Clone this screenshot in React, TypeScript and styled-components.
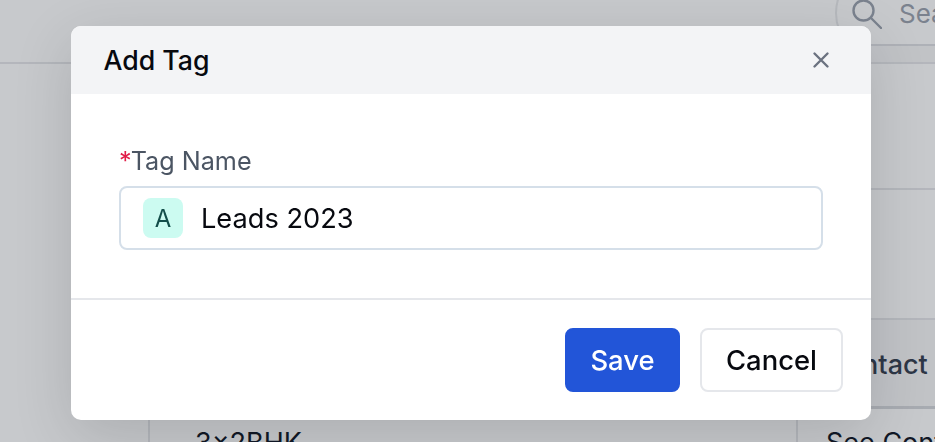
import React from 'react';
import styled, { createGlobalStyle } from 'styled-components';

const GlobalStyle = createGlobalStyle`
  html, body {
    margin: 0;
    padding: 0;
    width: 935px;
    height: 442px;
    overflow: hidden;
    font-family: 'Inter', 'Liberation Sans', sans-serif;
  }
  * { box-sizing: border-box; }
`;

// dimmed page behind the dialog
const Page = styled.div`
  width: 935px;
  height: 442px;
  overflow: hidden;
  background: #fff;
`;

const TopBar = styled.header`
  height: 64px;
  border-bottom: 2px solid #e6e7ea;
  display: flex;
  justify-content: flex-end;
`;

const TopRight = styled.div`
  width: 300px;
  background: #f7f7f8;
`;

const SearchArea = styled.div`
  height: 46px;
  background: #fff;
  border-bottom: 2px solid #dfe0e4;
  padding-left: 200px;
  overflow: hidden;
`;

const SearchPill = styled.div`
  width: 300px;
  height: 90px;
  margin-top: -32px;
  border: 2px solid #e9eaec;
  border-radius: 45px;
  display: flex;
  align-items: center;
  gap: 17px;
  padding: 1px 0 0 15px;
  color: #9ca3af;
  font-size: 26px;
  line-height: 30px;

  svg {
    flex: none;
  }
`;

const Table = styled.div`
  margin-left: 148px;
  display: grid;
  grid-template-columns: 648px 1fr;
  grid-template-rows: 126px 130px 89px 60px;
`;

const Cell = styled.div<{ $head?: boolean }>`
  border-left: 2px solid #e6e7ea;
  border-bottom: ${p => (p.$head ? '3px solid #d6d8dc' : '2px solid #e6e7ea')};
  background: ${p => (p.$head ? '#f7f7f8' : '#fff')};
  font-size: 27px;
  line-height: 32px;
  color: #111827;
  padding-left: 28px;
  white-space: nowrap;
`;

const HeadLabel = styled.span`
  display: block;
  padding-top: 29px;
  color: #374151;
  font-weight: 500;
`;

const RowLabel = styled.span<{ $left: number }>`
  display: block;
  padding-top: 18px;
  padding-left: ${p => p.$left}px;
`;

// dialog layer
const Overlay = styled.div`
  position: fixed;
  inset: 0;
  background: rgba(17, 24, 39, 0.235);
  padding: 26px 0 0 71px;
`;

const Dialog = styled.div`
  width: 800px;
  height: 394px;
  background: #fff;
  border-radius: 10px;
  overflow: hidden;
  display: flex;
  flex-direction: column;
  box-shadow: 0 16px 60px rgba(0, 0, 0, 0.14);
`;

const DialogHeader = styled.div`
  flex: none;
  height: 68px;
  background: #f3f4f6;
  display: flex;
  align-items: center;
  justify-content: space-between;
  padding: 0 40px 0 32.5px;
`;

const Title = styled.h2`
  margin: 0;
  font-size: 26.7px;
  font-weight: 500;
  color: #07090f;
`;

const CloseButton = styled.button`
  border: none;
  background: transparent;
  padding: 0;
  display: flex;
  color: #6b7280;
`;

const DialogBody = styled.div`
  flex: none;
  height: 206px;
  padding: 51px 48px 0;
  border-bottom: 2px solid #e5e7eb;
`;

const Label = styled.label`
  display: block;
  height: 32px;
  font-size: 25.2px;
  line-height: 32px;
  color: #4b5563;
  margin-bottom: 9px;
`;

const Required = styled.span`
  color: #e11d48;
  margin-right: -1px;
`;

const TagInput = styled.div`
  width: 704px;
  height: 64px;
  border: 2px solid #d5dfe9;
  border-radius: 8px;
  display: flex;
  align-items: center;
  gap: 18px;
  padding-left: 22px;
`;

const IconBadge = styled.span`
  width: 40px;
  height: 40px;
  border-radius: 8px;
  background: #ccfbf1;
  color: #134e4a;
  font-size: 24px;
  display: flex;
  align-items: center;
  justify-content: center;
`;

const TagValue = styled.span`
  font-size: 27.2px;
  color: #07090f;
`;

const DialogFooter = styled.div`
  flex: 1;
  display: flex;
  justify-content: flex-end;
  gap: 20px;
  padding: 28px 28px 0 0;
`;

const Button = styled.button<{ $primary?: boolean }>`
  height: 64px;
  width: ${p => (p.$primary ? '115px' : '143px')};
  border-radius: 8px;
  border: 2px solid ${p => (p.$primary ? '#2255d8' : '#e5e7eb')};
  background: ${p => (p.$primary ? '#2255d8' : '#fff')};
  color: ${p => (p.$primary ? '#fff' : '#07090f')};
  font-family: inherit;
  font-size: 27.4px;
  font-weight: 500;
  padding: 0;
`;

export default function App() {
  return (
    <>
      <GlobalStyle />
      <Page>
        <TopBar>
          <TopRight>
            <SearchArea>
              <SearchPill>
                <svg width="30" height="30" viewBox="0 0 30 30" fill="none" stroke="currentColor" strokeWidth="2.4">
                  <circle cx="11.5" cy="11.5" r="10" />
                  <path d="M19 19l10 10" strokeLinecap="round" />
                </svg>
                Search
              </SearchPill>
            </SearchArea>
          </TopRight>
        </TopBar>
        <Table>
          <Cell />
          <Cell />
          <Cell />
          <Cell />
          <Cell $head />
          <Cell $head>
            <HeadLabel>Contact</HeadLabel>
          </Cell>
          <Cell>
            <RowLabel $left={17}>3x2BHK</RowLabel>
          </Cell>
          <Cell>
            <RowLabel $left={0}>See Contact</RowLabel>
          </Cell>
        </Table>
      </Page>
      <Overlay>
        <Dialog>
          <DialogHeader>
            <Title>Add Tag</Title>
            <CloseButton aria-label="Close">
              <svg width="20" height="20" viewBox="0 0 20 20" fill="none" stroke="currentColor" strokeWidth="2.4" strokeLinecap="round">
                <path d="M3.5 3.5l13 13M16.5 3.5l-13 13" />
              </svg>
            </CloseButton>
          </DialogHeader>
          <DialogBody>
            <Label>
              <Required>*</Required>Tag Name
            </Label>
            <TagInput>
              <IconBadge>A</IconBadge>
              <TagValue>Leads 2023</TagValue>
            </TagInput>
          </DialogBody>
          <DialogFooter>
            <Button $primary>Save</Button>
            <Button>Cancel</Button>
          </DialogFooter>
        </Dialog>
      </Overlay>
    </>
  );
}
